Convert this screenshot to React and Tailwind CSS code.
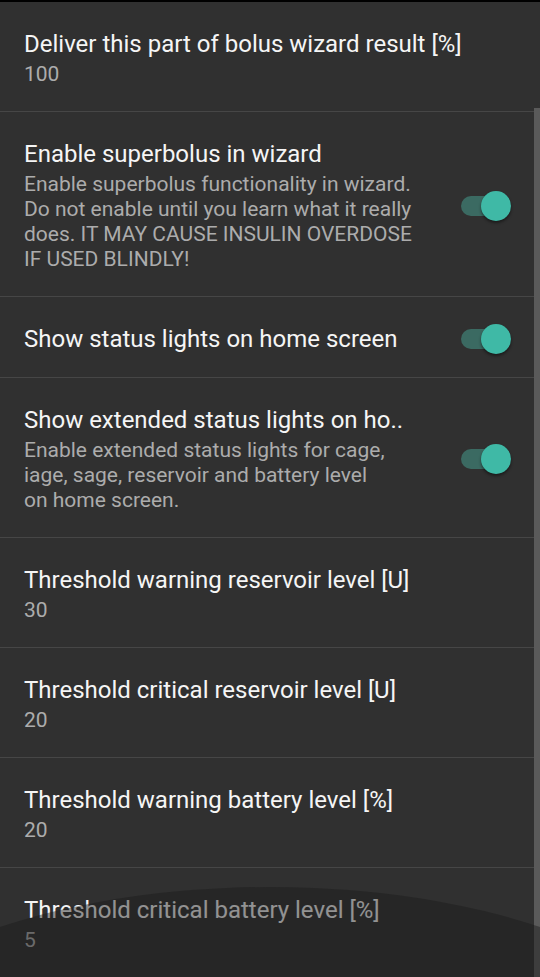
import React from "react";

function Toggle() {
  return (
    <div className="relative w-[50px] h-[30px] shrink-0 flex items-center">
      <div className="absolute left-0 top-[5px] w-[44px] h-[20px] rounded-full bg-[#3b6a62]" />
      <div className="absolute right-0 top-0 w-[30px] h-[30px] rounded-full bg-[#3fb9a6] shadow-[0_2px_3px_rgba(0,0,0,0.45)]" />
    </div>
  );
}

function Row({ title, summary, toggle, first }) {
  return (
    <div
      className={
        "flex items-center pl-6 pr-[29px] pt-[27px] " +
        (summary ? "pb-6 " : "pb-[23px] ") +
        (first ? "" : "border-t border-[#464646]")
      }
    >
      <div className="flex-1 min-w-0">
        <div className="text-[24px] leading-[30px] text-[#f5f5f5] whitespace-nowrap">
          {title}
        </div>
        {summary && (
          <div className="mt-[3px] text-[21px] leading-[25px] text-[#acacac] whitespace-nowrap">
            {summary}
          </div>
        )}
      </div>
      {toggle && <Toggle />}
    </div>
  );
}

export default function App() {
  return (
    <div className="relative w-[540px] h-[977px] overflow-hidden bg-[#303030] font-['Roboto',sans-serif]">
      <div className="h-[2px] bg-black" />
      <Row first title="Deliver this part of bolus wizard result [%]" summary="100" />
      <Row
        title="Enable superbolus in wizard"
        summary={
          <>
            Enable superbolus functionality in wizard.
            <br />
            Do not enable until you learn what it really
            <br />
            does. IT MAY CAUSE INSULIN OVERDOSE
            <br />
            IF USED BLINDLY!
          </>
        }
        toggle
      />
      <Row title="Show status lights on home screen" toggle />
      <Row
        title="Show extended status lights on ho.."
        summary={
          <>
            Enable extended status lights for cage,
            <br />
            iage, sage, reservoir and battery level
            <br />
            on home screen.
          </>
        }
        toggle
      />
      <Row title="Threshold warning reservoir level [U]" summary="30" />
      <Row title="Threshold critical reservoir level [U]" summary="20" />
      <Row title="Threshold warning battery level [%]" summary="20" />
      <Row title="Threshold critical battery level [%]" summary="5" />

      <div className="absolute right-0 top-[108px] bottom-0 w-[6px] bg-[#5a5a5a]" />
      <div className="absolute left-[-180px] top-[887px] w-[900px] h-[400px] rounded-[50%] bg-[rgba(26,26,26,0.45)]" />
    </div>
  );
}
